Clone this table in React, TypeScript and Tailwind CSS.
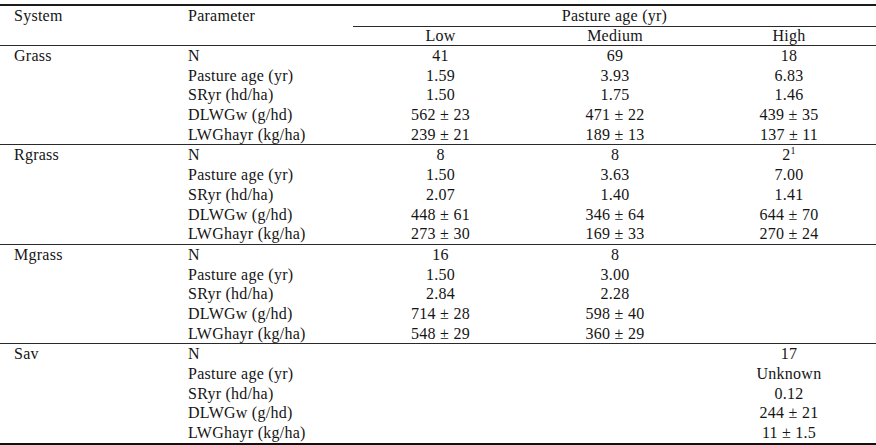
import React from 'react';

type Row = {
  param: string;
  low: React.ReactNode;
  medium: React.ReactNode;
  high: React.ReactNode;
};

type Group = {
  system: string;
  rows: Row[];
};

const params = ['N', 'Pasture age (yr)', 'SRyr (hd/ha)', 'DLWGw (g/hd)', 'LWGhayr (kg/ha)'];

const groups: Group[] = [
  {
    system: 'Grass',
    rows: [
      { param: params[0], low: '41', medium: '69', high: '18' },
      { param: params[1], low: '1.59', medium: '3.93', high: '6.83' },
      { param: params[2], low: '1.50', medium: '1.75', high: '1.46' },
      { param: params[3], low: '562 ± 23', medium: '471 ± 22', high: '439 ± 35' },
      { param: params[4], low: '239 ± 21', medium: '189 ± 13', high: '137 ± 11' },
    ],
  },
  {
    system: 'Rgrass',
    rows: [
      {
        param: params[0],
        low: '8',
        medium: '8',
        high: (
          <>
            2<sup className="text-[10px] relative -top-[6px]">1</sup>
          </>
        ),
      },
      { param: params[1], low: '1.50', medium: '3.63', high: '7.00' },
      { param: params[2], low: '2.07', medium: '1.40', high: '1.41' },
      { param: params[3], low: '448 ± 61', medium: '346 ± 64', high: '644 ± 70' },
      { param: params[4], low: '273 ± 30', medium: '169 ± 33', high: '270 ± 24' },
    ],
  },
  {
    system: 'Mgrass',
    rows: [
      { param: params[0], low: '16', medium: '8', high: '' },
      { param: params[1], low: '1.50', medium: '3.00', high: '' },
      { param: params[2], low: '2.84', medium: '2.28', high: '' },
      { param: params[3], low: '714 ± 28', medium: '598 ± 40', high: '' },
      { param: params[4], low: '548 ± 29', medium: '360 ± 29', high: '' },
    ],
  },
  {
    system: 'Sav',
    rows: [
      { param: params[0], low: '', medium: '', high: '17' },
      { param: params[1], low: '', medium: '', high: 'Unknown' },
      { param: params[2], low: '', medium: '', high: '0.12' },
      { param: params[3], low: '', medium: '', high: '244 ± 21' },
      { param: params[4], low: '', medium: '', high: '11 ± 1.5' },
    ],
  },
];

const cols = 'grid grid-cols-[180px_173px_175px_174px_174px]';

export default function App() {
  return (
    <div className="w-[876px] h-[445px] overflow-hidden bg-white pt-[4px] font-['Liberation_Serif','Times_New_Roman',serif] text-[16px] tracking-[0.25px] text-[#151515]">
      <div className="border-t-2 border-[#1c1c1c]">
        {/* header */}
        <div className={`${cols} grid-rows-[21px_18px] border-b border-[#2a2a2a]`}>
          <div className="row-span-2 pl-[14px] leading-[20px]">System</div>
          <div className="row-span-2 pl-[8px] leading-[20px]">Parameter</div>
          <div className="col-span-3 text-center leading-[20px] border-b border-[#2a2a2a]">Pasture age (yr)</div>
          <div className="text-center leading-[18px]">Low</div>
          <div className="text-center leading-[18px]">Medium</div>
          <div className="text-center leading-[18px]">High</div>
        </div>

        {groups.map((group, gi) => (
          <div
            key={group.system}
            className={
              gi === groups.length - 1
                ? 'border-b-[3px] border-[#111]'
                : 'border-b border-[#2a2a2a]'
            }
          >
            {group.rows.map((row, ri) => (
              <div key={row.param} className={`${cols} h-[19.7px] leading-[19.7px] whitespace-nowrap`}>
                <div className="pl-[14px]">{ri === 0 ? group.system : ''}</div>
                <div className="pl-[8px]">{row.param}</div>
                <div className="text-center">{row.low}</div>
                <div className="text-center">{row.medium}</div>
                <div className="text-center">{row.high}</div>
              </div>
            ))}
          </div>
        ))}
      </div>
    </div>
  );
}
